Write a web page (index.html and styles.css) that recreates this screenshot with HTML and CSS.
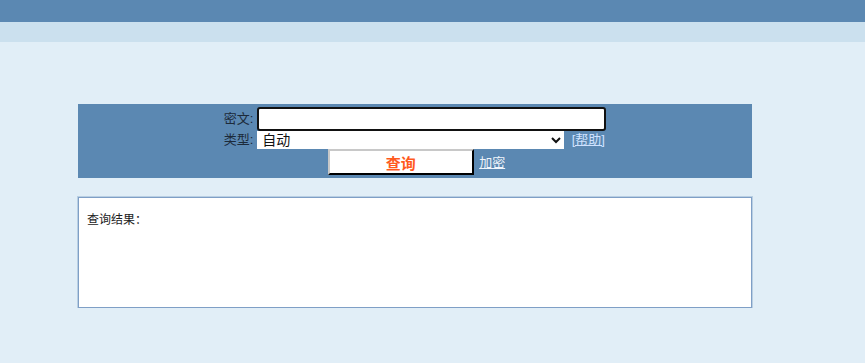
FILE: index.html
```html
<!DOCTYPE html>
<html lang="zh">
<head>
  <meta charset="UTF-8">
  <title>查询</title>
  <link rel="stylesheet" href="styles.css">
</head>
<body>
  <div class="top-bar"></div>
  <div class="sub-bar"></div>

  <div class="main">
    <form class="query-form" onsubmit="return false;">
      <table class="query-table">
        <tr class="row-cipher">
          <td class="label">密文:</td>
          <td><input type="text" class="cipher-input"></td>
        </tr>
        <tr class="row-type">
          <td class="label">类型:</td>
          <td>
            <select class="type-select">
              <option>自动</option>
            </select>
            <a href="#" class="help-link">[帮助]</a>
          </td>
        </tr>
        <tr class="row-btn">
          <td colspan="2" class="btn-row">
            <button type="submit" class="query-btn">查询</button>
            <a href="#" class="encrypt-link">加密</a>
          </td>
        </tr>
      </table>
    </form>

    <div class="result-box">
      <div class="result-title">查询结果：</div>
    </div>
  </div>
</body>
</html>
```

FILE: styles.css
```css
body, html {
  margin: 0; padding: 0;
  font-family: "Liberation Sans", "Noto Sans CJK SC", sans-serif;
  font-size: 12px;
  background-color: #e1eef7;
  color: #222;
}
.top-bar {
  height: 22px;
  background: #5b88b2;
}
.sub-bar {
  height: 20px;
  background: #cbe0ee;
}
.main {
  width: 674px;
  margin-left: 78px;
  padding-top: 62px;
}
.query-form {
  margin: 0;
  background: #5b88b2;
  height: 74px;
  box-sizing: border-box;
  padding-top: 3px;
}
.query-table {
  margin: 0 auto;
  border-collapse: collapse;
}
.query-table td {
  padding: 0;
  line-height: 18px;
  vertical-align: middle;
}
.row-cipher td { height: 24px; }
.row-type td { height: 18px; }
.row-btn td { height: 27px; vertical-align: bottom; }
.query-table .label {
  text-align: right;
  padding-right: 4px;
  font-size: 13px;
  color: #1c2a3a;
}
.cipher-input {
  display: block;
  box-sizing: border-box;
  width: 349px; height: 24px;
  border: 2px solid #111;
  border-radius: 3px;
  background: #fff;
  outline: none;
  margin: 0;
}
.type-select {
  box-sizing: border-box;
  width: 307px; height: 18px;
  border: none;
  background: #fff;
  font-family: "Liberation Sans", "Noto Sans CJK SC", sans-serif;
  font-size: 14px;
  color: #111;
  margin: 0;
  padding: 0 1px;
  vertical-align: top;
}
.help-link {
  color: #cfe2ff;
  margin-left: 4px;
  font-size: 13px;
  vertical-align: top;
}
.btn-row {
  text-align: center;
  padding-left: 3px !important;
}
.query-btn {
  box-sizing: border-box;
  width: 146px; height: 26px;
  background: #fff;
  border: 2px outset #c8c8c8;
  border-right-color: #333;
  border-bottom-color: #333;
  color: #ff5a1e;
  font-family: "Noto Sans CJK SC", sans-serif;
  font-size: 15px;
  font-weight: bold;
  padding: 0;
  margin: 0 0 1px;
  vertical-align: middle;
  cursor: pointer;
}
.encrypt-link {
  color: #eef4fb;
  margin-left: 2px;
  font-size: 13px;
  vertical-align: middle;
}
.result-box {
  margin-top: 19px;
  height: 109px;
  background: #fff;
  border: 1px solid #7f9fc6;
  box-shadow: 0 0 0 1px #b9cfe3;
}
.result-title {
  padding: 12px 0 0 8px;
}
```
